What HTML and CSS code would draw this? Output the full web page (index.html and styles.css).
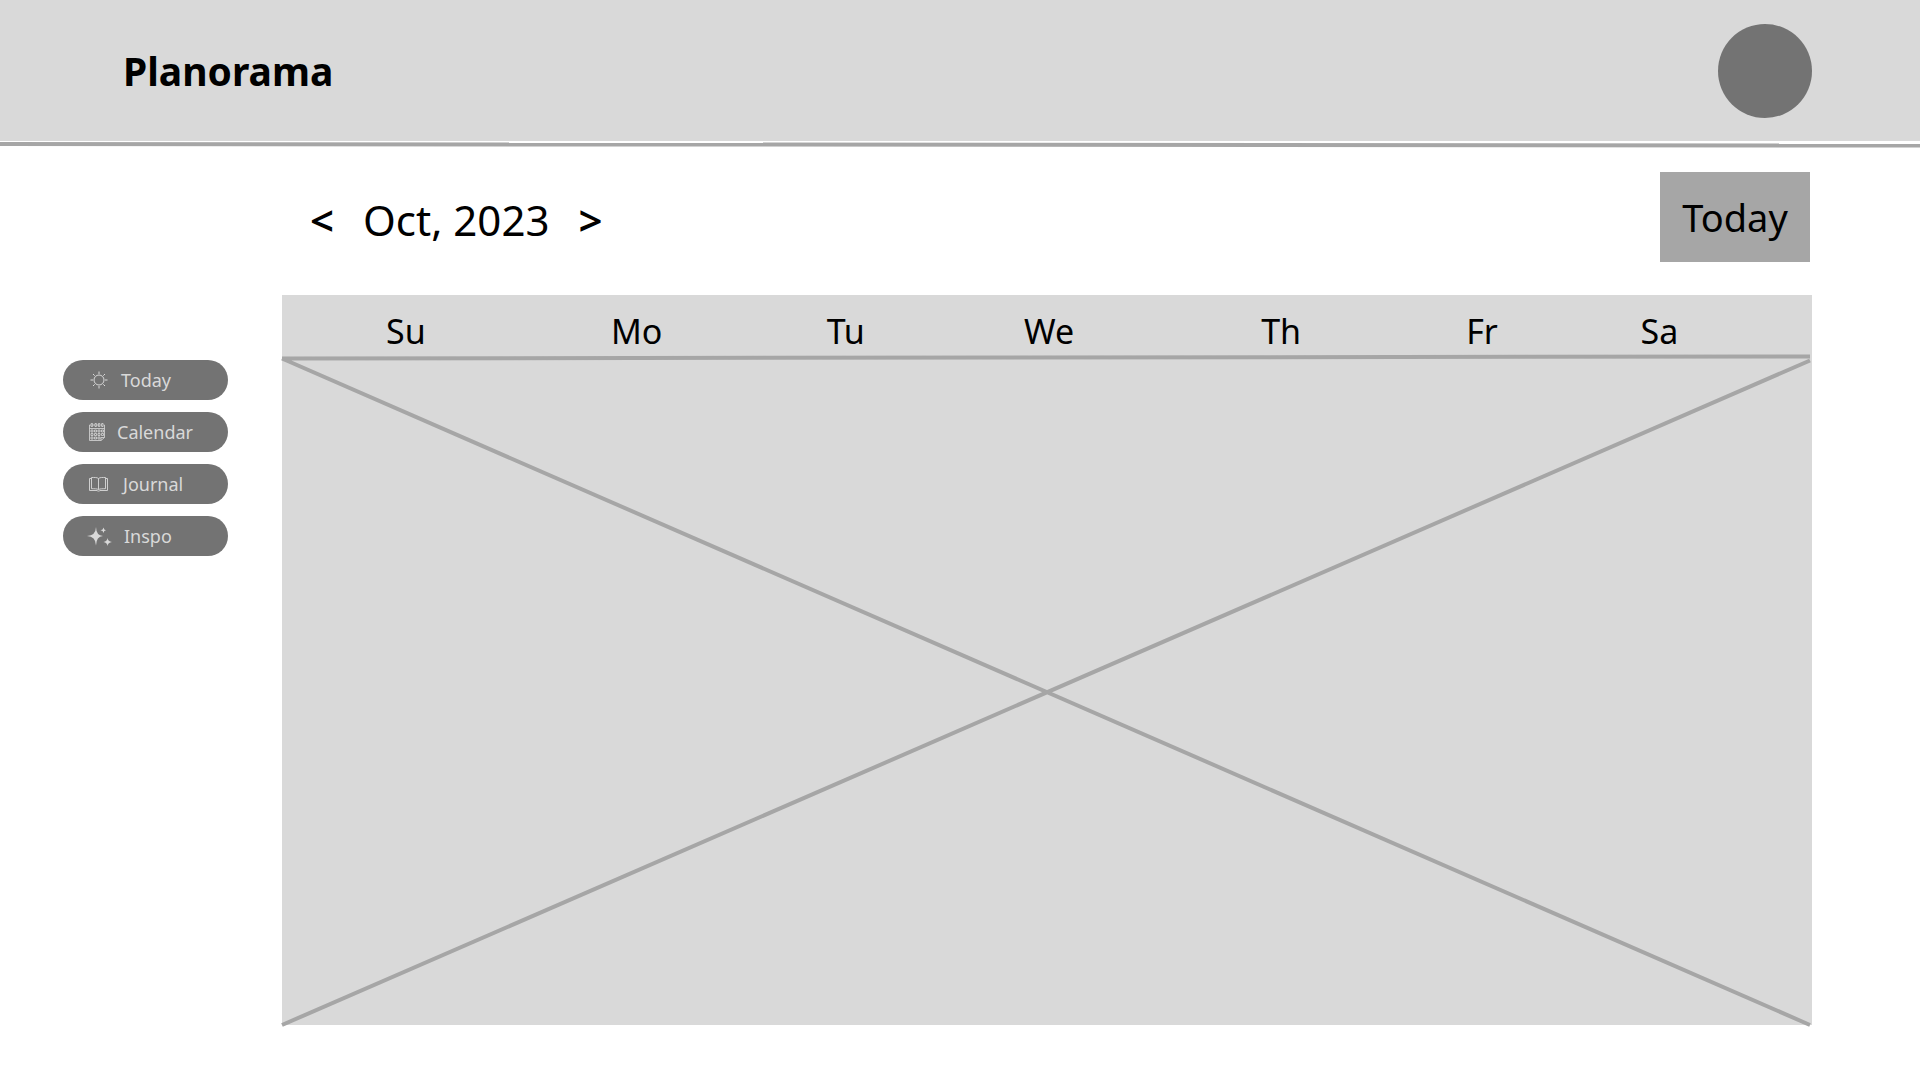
FILE: index.html
```html
<!DOCTYPE html>
<html lang="en">
<head>
<meta charset="utf-8">
<title>Planorama</title>
<meta name="viewport" content="width=device-width, initial-scale=1">
<link rel="stylesheet" href="styles.css">
</head>
<body>
<header class="topbar">
  <h1 class="brand">Planorama</h1>
  <button class="avatar" type="button" aria-label="Account"></button>
</header>
<svg class="divider" viewBox="0 0 1920 8" preserveAspectRatio="none" aria-hidden="true">
  <path d="M0 3L1920 4.500" stroke="#a6a6a6" stroke-width="4"/>
</svg>

<div class="layout">
  <nav class="sidebar" aria-label="Sections">
    <button class="pill" type="button">
      <svg width="20" height="20" viewBox="0 0 20 20" fill="none" stroke="#d9d9d9" aria-hidden="true">
        <circle cx="10" cy="10" r="5"/>
        <path d="M10 1.500v2.500M10 16v2.500M1.500 10H4M16 10h2.500M4 4l1.700 1.700M14.300 14.300L16 16M4 16l1.700-1.700M14.300 5.700L16 4"/>
      </svg>
      <span>Today</span>
    </button>
    <button class="pill" type="button">
      <svg width="16" height="20" viewBox="0 0 16 20" fill="none" stroke="#d9d9d9" stroke-width=".8" aria-hidden="true">
        <path d="M.5 3v15.500H12l3.500-3V3M.5 6.500h15M12 18.500v-3h3.500M.5 3h1.500M4 3h2M8 3h1.500M11.500 3h1.500M15 3h.5"/>
        <path d="M2.200 1.500h1.400v3H2.200zM6 1.500h1.400v3H6zM9.400 1.500h1.400v3H9.400zM12.700 1.500h1.400v3h-1.400z"/>
        <path d="M5.500 8h2v2h-2zM9 8h2v2H9zM12.500 8h2v2h-2zM2 8h2v2H2zM2 11.500h2v2H2zM5.500 11.500h2v2h-2zM9 11.500h2v2H9zM12.500 11.500h2v2h-2zM2 15h2v2H2zM5.500 15h2v2h-2zM9 15h2v2H9z"/>
      </svg>
      <span>Calendar</span>
    </button>
    <button class="pill" type="button">
      <svg width="22" height="20" viewBox="0 0 22 20" fill="none" stroke="#d9d9d9" stroke-width=".9" aria-hidden="true">
        <path d="M9.500 15.500C8 14.700 5 14.700 2.500 14.700V3.500C5 3.500 8 3.200 9.500 4.500C11 3.200 14 3.500 16.500 3.500v11.200C14 14.700 11 14.700 9.500 15.500zM9.500 4.500v11M2.500 4.500h-2v12h7.500c1 .8 2 .8 3 0h7.500v-12h-2"/>
      </svg>
      <span>Journal</span>
    </button>
    <button class="pill" type="button">
      <svg class="sparkles" width="23" height="20" viewBox="3 0 23 20" fill="#d9d9d9" aria-hidden="true">
        <path d="M10 1Q10.300 9.700 17 10Q10.300 10.300 10 19.500Q9.700 10.300 1 10Q9.700 9.700 10 1zM17.500 1.500Q17.800 4 20 4.200Q17.800 4.400 17.500 7Q17.200 4.400 14.500 4.200Q17.200 4 17.500 1.500zM21.500 12Q21.900 15.600 26 16Q21.900 16.400 21.500 20Q21.100 16.400 17.500 16Q21.100 15.600 21.500 12z"/>
      </svg>
      <span>Inspo</span>
    </button>
  </nav>

  <main class="content">
    <div class="toolbar">
      <div class="month-nav">
        <button class="arrow" type="button" aria-label="Previous month">&lt;</button>
        <h2 class="month">Oct, 2023</h2>
        <button class="arrow" type="button" aria-label="Next month">&gt;</button>
      </div>
      <button class="today" type="button">Today</button>
    </div>

    <table class="calendar">
      <thead>
        <tr>
          <th class="su" scope="col">Su</th>
          <th class="mo" scope="col">Mo</th>
          <th class="tu" scope="col">Tu</th>
          <th class="we" scope="col">We</th>
          <th class="th" scope="col">Th</th>
          <th class="fr" scope="col">Fr</th>
          <th class="sa" scope="col">Sa</th>
        </tr>
      </thead>
      <tbody>
        <tr>
          <td colspan="7">
            <svg class="placeholder" viewBox="0 0 1530 670" preserveAspectRatio="none" aria-hidden="true">
              <path d="M0 3.500L1528 1.500M0 3.500L1528 670M0 670L1528 5.500" stroke="#a6a6a6" stroke-width="4"/>
            </svg>
          </td>
        </tr>
      </tbody>
    </table>
  </main>
</div>
</body>
</html>
```
FILE: styles.css
```css
* {
  box-sizing: border-box;
}

body {
  margin: 0;
  background: #fff;
  color: #000;
  font-family: "Noto Sans", sans-serif;
}

button {
  border: 0;
  padding: 0;
  color: inherit;
  font-family: inherit;
  cursor: pointer;
}

svg {
  display: block;
}

.topbar {
  display: flex;
  align-items: center;
  justify-content: space-between;
  padding: 24px 108px 23px 123px;
  background: #d9d9d9;
}

.brand {
  margin: 0;
  font-size: 39px;
  line-height: 56px;
  font-weight: 700;
}

.avatar {
  width: 94px;
  height: 94px;
  border-radius: 50%;
  background: #737373;
}

.divider {
  width: 100%;
  height: 8px;
}

.layout {
  display: flex;
  padding: 23px 108px 55px 63px;
}

.sidebar {
  display: flex;
  flex: none;
  flex-direction: column;
  gap: 12px;
  width: 219px;
  padding-top: 188px;
}

.pill {
  display: flex;
  align-items: center;
  gap: 12px;
  width: 165px;
  height: 40px;
  padding-left: 26px;
  border-radius: 20px;
  background: #737373;
  color: #d9d9d9;
  font-size: 18px;
  line-height: 24px;
}

.sparkles {
  overflow: visible;
}

.content {
  flex: 1;
}

.toolbar {
  display: flex;
  align-items: center;
  justify-content: space-between;
  padding: 0 2px 33px 28px;
}

.month-nav {
  display: flex;
  align-items: center;
  gap: 29px;
  padding-top: 6px;
}

.month {
  margin: 0;
  font-size: 42px;
  line-height: 56px;
  font-weight: 400;
}

.arrow {
  background: none;
  font-size: 42px;
  line-height: 56px;
  font-weight: 600;
}

.today {
  width: 150px;
  height: 90px;
  background: #a6a6a6;
  font-size: 38px;
  line-height: 48px;
}

.calendar {
  width: 100%;
  table-layout: fixed;
  border-collapse: collapse;
  background: #d9d9d9;
}

.calendar th {
  height: 60px;
  padding: 12px 0 0 104px;
  font-size: 34px;
  line-height: 48px;
  font-weight: 400;
  text-align: left;
}

.calendar td {
  padding: 0;
}

.su { width: 14.7%; }
.mo { width: 14.1%; }
.tu { width: 12.9%; }
.we { width: 15.5%; }
.th { width: 13.4%; }
.fr { width: 11.4%; }
.sa { width: 18%; }

.placeholder {
  width: 100%;
  height: 670px;
  overflow: visible;
}
```
